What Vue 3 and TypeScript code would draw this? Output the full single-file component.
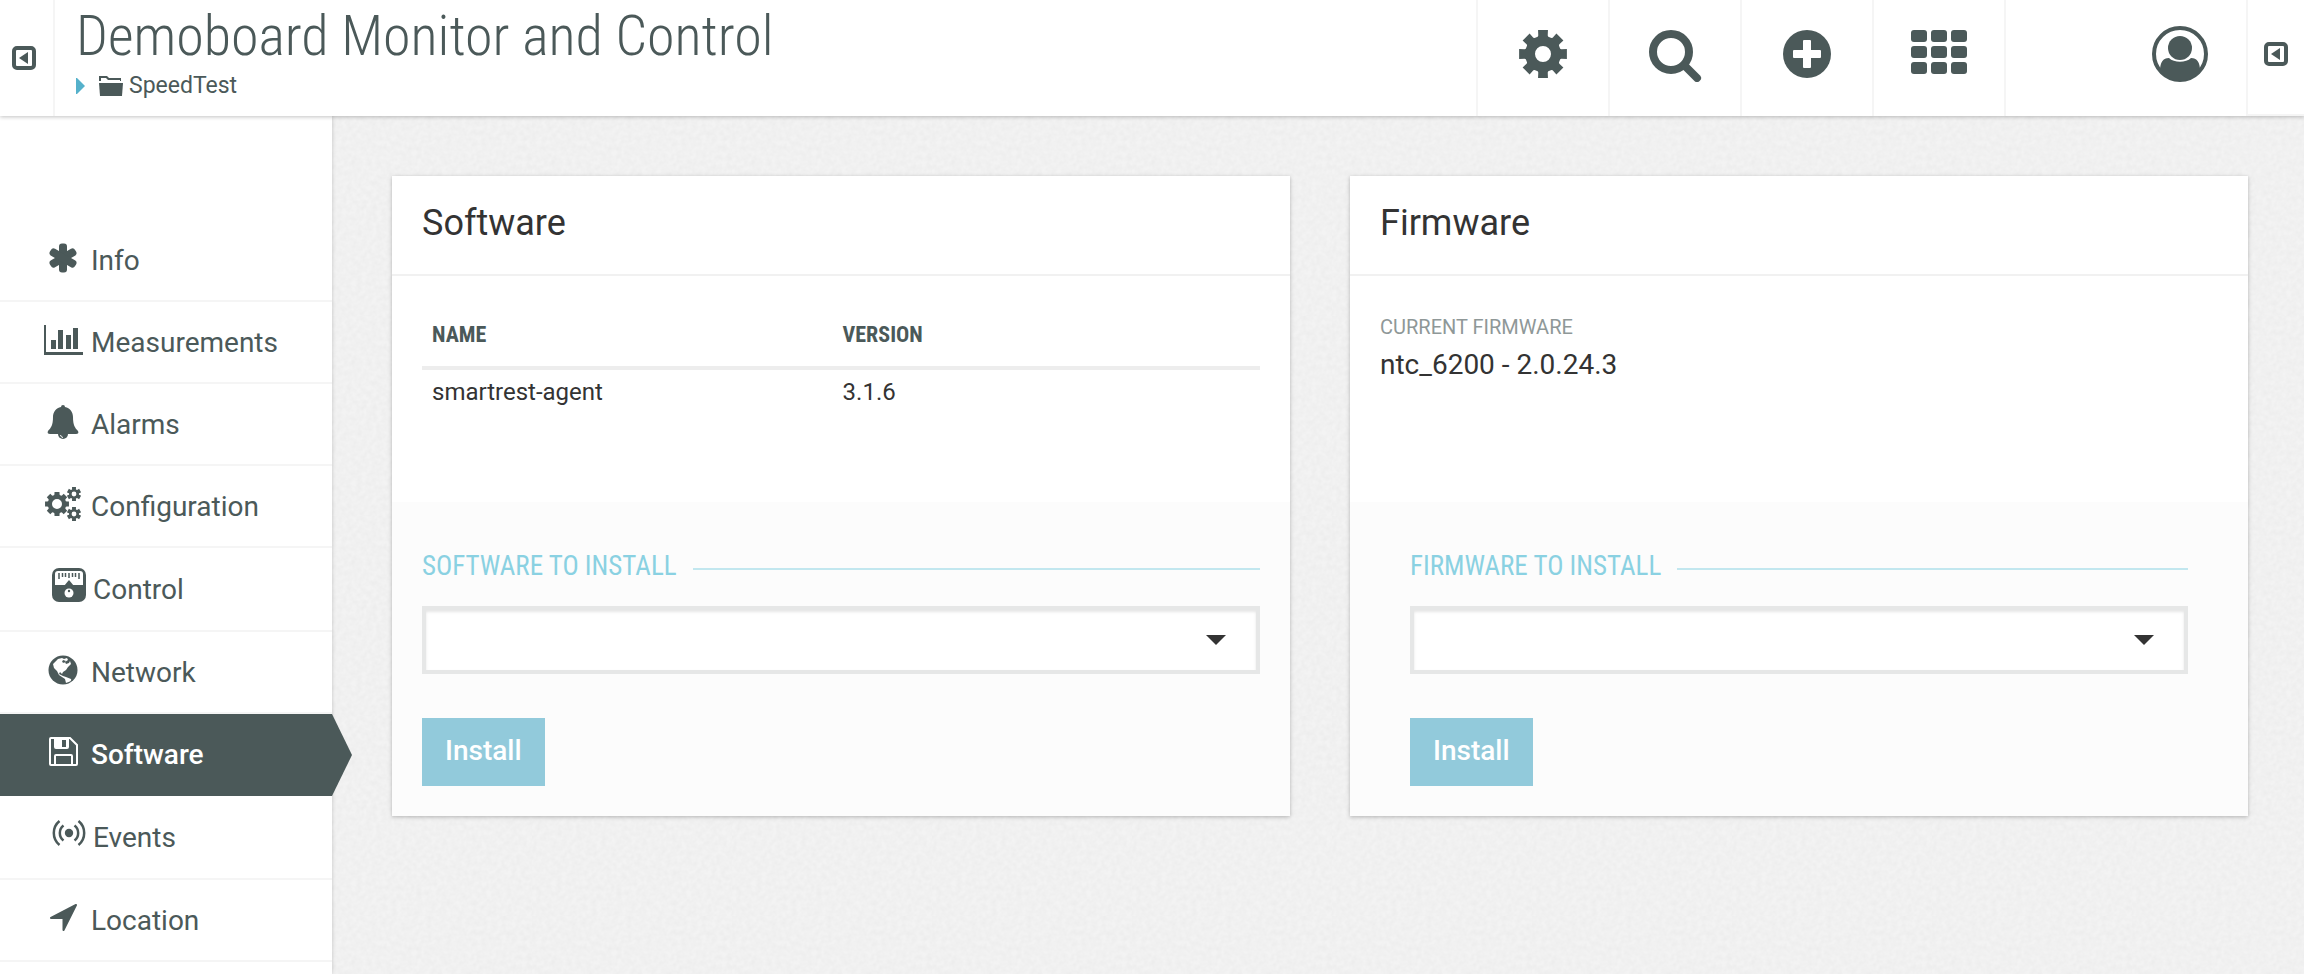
<script setup lang="ts">
import { ref } from 'vue'

type IconName =
  | 'info' | 'chart' | 'bell' | 'cogs' | 'control'
  | 'globe' | 'floppy' | 'events' | 'arrow'

interface NavItem {
  label: string
  icon: IconName
  wide?: boolean
}

const navItems: NavItem[] = [
  { label: 'Info', icon: 'info' },
  { label: 'Measurements', icon: 'chart' },
  { label: 'Alarms', icon: 'bell' },
  { label: 'Configuration', icon: 'cogs' },
  { label: 'Control', icon: 'control', wide: true },
  { label: 'Network', icon: 'globe' },
  { label: 'Software', icon: 'floppy' },
  { label: 'Events', icon: 'events', wide: true },
  { label: 'Location', icon: 'arrow' },
]

const active = ref('Software')
const software = [{ name: 'smartrest-agent', version: '3.1.6' }]
const chosenSoftware = ref('')
const chosenFirmware = ref('')
const apps = Array.from({ length: 9 }, (_, i) => ({ x: (i % 3) * 20, y: Math.floor(i / 3) * 16 }))

/* Gear outline with trapezoid teeth and a round hole, for fill-rule evenodd. */
function gear(cx: number, cy: number, outer: number, inner: number, hole: number, teeth = 8): string {
  const step = (Math.PI * 2) / teeth
  const points: string[] = []
  const at = (radius: number, angle: number) =>
    `${(cx + radius * Math.sin(angle)).toFixed(2)} ${(cy - radius * Math.cos(angle)).toFixed(2)}`
  for (let i = 0; i < teeth; i++) {
    const a = i * step
    points.push(at(inner, a - step * 0.38), at(inner + 1, a - step * 0.32))
    points.push(at(outer, a - step * 0.26), at(outer, a + step * 0.26))
    points.push(at(inner + 1, a + step * 0.32), at(inner, a + step * 0.38))
  }
  return `M${points.join('L')}Z M${cx - hole} ${cy}a${hole} ${hole} 0 1 0 ${hole * 2} 0a${hole} ${hole} 0 1 0 ${-hole * 2} 0Z`
}
</script>

<template>
  <div class="page">
    <header class="topbar">
      <button class="toggle toggle-left" type="button" aria-label="Toggle navigator">
        <svg width="24" height="24" viewBox="0 0 24 24">
          <rect x="2" y="2" width="20" height="20" rx="3" fill="none" stroke="currentColor" stroke-width="4" />
          <path d="M16 6v12L7 12z" fill="currentColor" />
        </svg>
      </button>
      <div class="heading">
        <h1>Demoboard Monitor and Control</h1>
        <nav class="crumbs" aria-label="Breadcrumb">
          <svg class="crumb-arrow" width="9" height="16" viewBox="0 0 9 16"><path d="M0 0h1l8 8-8 8H0z" fill="#55b1cb" /></svg>
          <a href="#speedtest">
            <svg width="24" height="20" viewBox="0 0 24 20" fill="currentColor">
              <path d="M0 7h24l-1 13H1z" />
              <path d="M0 5V0h8l2 2h12v3h-1V4H9L7 2H2v3z" />
            </svg>
            SpeedTest
          </a>
        </nav>
      </div>
      <div class="actions">
        <button type="button" aria-label="Settings">
          <svg width="48" height="48" viewBox="0 0 48 48"><path :d="gear(24, 24, 24.4, 18, 8)" fill="currentColor" fill-rule="evenodd" /></svg>
        </button>
        <button type="button" aria-label="Search">
          <svg width="56" height="52" viewBox="0 0 56 52" class="search">
            <circle cx="24" cy="22" r="18" fill="none" stroke="currentColor" stroke-width="8" />
            <path d="M38 36l12 12" stroke="currentColor" stroke-width="8" stroke-linecap="round" />
          </svg>
        </button>
        <button type="button" aria-label="Add">
          <svg width="48" height="48" viewBox="0 0 48 48">
            <circle cx="24" cy="24" r="24" fill="currentColor" />
            <rect x="20" y="10" width="8" height="28" rx="1" fill="#fff" />
            <rect x="10" y="20" width="28" height="8" rx="1" fill="#fff" />
          </svg>
        </button>
        <button type="button" aria-label="Applications">
          <svg width="56" height="48" viewBox="0 0 56 48" fill="currentColor">
            <rect v-for="(cell, i) in apps" :key="i" :x="cell.x" :y="cell.y" width="16" height="12" rx="3" />
          </svg>
        </button>
      </div>
      <button class="user" type="button" aria-label="User">
        <svg width="56" height="56" viewBox="0 0 56 56">
          <circle cx="28" cy="28" r="26" fill="none" stroke="currentColor" stroke-width="4" />
          <path d="M8 45C8 36 11 32 17 32C22 37 34 37 39 32C45 32 48 36 48 45C38 58 18 58 8 45z" fill="currentColor" />
          <circle cx="28" cy="22" r="12" fill="currentColor" />
        </svg>
      </button>
      <button class="toggle toggle-right" type="button" aria-label="Toggle side panel">
        <svg width="24" height="24" viewBox="0 0 24 24">
          <rect x="2" y="2" width="20" height="20" rx="3" fill="none" stroke="currentColor" stroke-width="4" />
          <path d="M16 6v12L7 12z" fill="currentColor" />
        </svg>
      </button>
    </header>

    <div class="body">
      <nav class="sidebar" aria-label="Device">
        <a
          v-for="item in navItems"
          :key="item.label"
          :href="'#' + item.label.toLowerCase()"
          :class="{ active: item.label === active, wide: item.wide }"
          @click.prevent="active = item.label"
        >
          <svg v-if="item.icon === 'info'" width="42" height="30" viewBox="-21 -15 42 30" fill="currentColor">
            <rect v-for="turn in [0, 60, 120]" :key="turn" x="-4" y="-14.5" width="8" height="29" rx="3" :transform="`rotate(${turn})`" />
          </svg>
          <svg v-else-if="item.icon === 'chart'" width="42" height="30" viewBox="-2 0 42 30" fill="currentColor">
            <path d="M0 0h2v27h37v3H0zM7 15h5v9H7zM14 5h5v19h-5zM22 10h5v14h-5zM29 3h5v21h-5z" />
          </svg>
          <svg v-else-if="item.icon === 'bell'" width="42" height="34" viewBox="-21 0 42 34" fill="currentColor">
            <path d="M-2 2a2 2 0 0 1 4 0C7 3 10 7 10 12C10 20 12 23 15 26C16 28 15 29 13 29H-13C-15 29-16 28-15 26C-12 23-10 20-10 12C-10 7-7 3-2 2z" />
            <path d="M-5 29H5A5 5 0 0 1-5 29z" />
            <path d="M-2.500 30a3 3 0 0 0 2.500 2.500" fill="none" stroke="#fff" />
          </svg>
          <svg v-else-if="item.icon === 'cogs'" width="42" height="34" viewBox="-3 0 42 34" fill="currentColor" fill-rule="evenodd">
            <path :d="gear(12, 17, 12.2, 9.300, 5)" />
            <path :d="gear(29, 7, 7.300, 5, 2.400, 6)" />
            <path :d="gear(29, 27, 7.300, 5, 2.400, 6)" />
          </svg>
          <svg v-else-if="item.icon === 'control'" width="34" height="34" viewBox="0 0 34 34">
            <rect width="34" height="34" rx="7" fill="currentColor" />
            <path d="M6 3h22q3 0 3 3v11H3V6q0-3 3-3z" fill="#fff" />
            <path d="M7 5v6M10.500 5v4M13.500 5v4M17 5v5M20.500 5v4M23.500 5v4M27 5v6" stroke="currentColor" stroke-width="1.500" />
            <path d="M12 18l5-6 5 6z" fill="currentColor" />
            <circle cx="17" cy="25" r="4.500" fill="#fff" />
            <circle cx="17" cy="23" r="1.200" fill="currentColor" />
          </svg>
          <svg v-else-if="item.icon === 'globe'" width="42" height="30" viewBox="-21 -15 42 30">
            <circle r="14.500" fill="currentColor" />
            <path d="M-10-6L-5-11L-1-12L1-11L4-12L5-10L2-8L3-6L6-7L7-9L8-6L5-3L3 0L0 2L-1 4L-3 2L-4 4L0 6L3 7L8 9C9 11 6 12 3 13L2 9L-4 5L-6 1L-9-2z" fill="#fff" />
            <path d="M0-10l3 1-2 2-2-1z" fill="currentColor" />
          </svg>
          <svg v-else-if="item.icon === 'floppy'" width="42" height="30" viewBox="-7 0 42 30">
            <path d="M1 2q0-1 1-1h19l7 7v19q0 1-1 1H2q-1 0-1-1z" fill="none" stroke="currentColor" stroke-width="2" />
            <path d="M5 1h15v9q0 2-2 2H7q-2 0-2-2zM13 3v7h4V3z" fill="currentColor" fill-rule="evenodd" />
            <path d="M6 28v-9q0-1 1-1h15q1 0 1 1v9" fill="none" stroke="currentColor" stroke-width="2" />
          </svg>
          <svg v-else-if="item.icon === 'events'" width="34" height="26" viewBox="-17 -13 34 26" fill="none" stroke="currentColor" stroke-width="2.500">
            <circle r="4.200" fill="currentColor" stroke="none" />
            <path d="M-5.500-7.500a9.500 9.500 0 0 0 0 15M5.500-7.500a9.500 9.500 0 0 1 0 15M-9.500-12a15.500 15.500 0 0 0 0 24M9.500-12a15.500 15.500 0 0 1 0 24" />
          </svg>
          <svg v-else width="42" height="28" viewBox="-7 0 42 28">
            <path d="M27 1L14.500 26V14H2z" fill="currentColor" stroke="currentColor" stroke-width="2" stroke-linejoin="round" />
          </svg>
          <span>{{ item.label }}</span>
        </a>
      </nav>

      <main class="content">
        <section class="card">
          <header><h2>Software</h2></header>
          <div class="card-body">
            <table>
              <thead>
                <tr><th scope="col">NAME</th><th scope="col">VERSION</th></tr>
              </thead>
              <tbody>
                <tr v-for="row in software" :key="row.name">
                  <td>{{ row.name }}</td>
                  <td>{{ row.version }}</td>
                </tr>
              </tbody>
            </table>
          </div>
          <form class="install" @submit.prevent>
            <label for="software-select">SOFTWARE TO INSTALL</label>
            <select id="software-select" v-model="chosenSoftware"><option value=""></option></select>
            <button type="submit">Install</button>
          </form>
        </section>

        <section class="card">
          <header><h2>Firmware</h2></header>
          <dl class="card-body current">
            <dt>CURRENT FIRMWARE</dt>
            <dd>ntc_6200 - 2.0.24.3</dd>
          </dl>
          <form class="install inset" @submit.prevent>
            <label for="firmware-select">FIRMWARE TO INSTALL</label>
            <select id="firmware-select" v-model="chosenFirmware"><option value=""></option></select>
            <button type="submit">Install</button>
          </form>
        </section>
      </main>
    </div>
  </div>
</template>

<style>
body {
  margin: 0;
}
</style>

<style scoped>
.page {
  --ink: #4b5959;
  --narrow: "Roboto Condensed", Roboto, "Liberation Sans", sans-serif;
  display: flex;
  flex-direction: column;
  min-height: 100vh;
  box-sizing: border-box;
  color: var(--ink);
  font-family: Roboto, "Liberation Sans", sans-serif;
  background: #f2f2f2;
}
.page * {
  box-sizing: border-box;
}
h1,
h2,
dl,
dd {
  margin: 0;
}
a {
  color: inherit;
  text-decoration: none;
}
button {
  border: 0;
  padding: 0;
  background: none;
  color: inherit;
  font-family: inherit;
  cursor: pointer;
}
svg {
  display: block;
  flex: none;
}

/* top bar */
.topbar {
  position: relative;
  z-index: 2;
  display: flex;
  height: 116px;
  background: #fff;
  box-shadow: 0 1px 4px rgba(0, 0, 0, 0.24);
}
.toggle {
  display: flex;
  align-items: center;
}
.toggle-left {
  width: 55px;
  padding-left: 12px;
  border-right: 2px solid #f5f5f5;
}
.toggle-right {
  width: 58px;
  padding: 0 0 6px 16px;
  border-left: 2px solid #f5f5f5;
  border-bottom: 2px solid #f5f5f5;
}
.heading {
  flex: 1;
  min-width: 0;
  padding: 6px 0 0 21px;
}
h1 {
  font: 300 56px/60px var(--narrow);
  white-space: nowrap;
}
.crumbs {
  display: flex;
  align-items: center;
  gap: 14px;
  height: 32px;
  margin-top: 4px;
  font-size: 23px;
  line-height: 32px;
}
.crumbs a {
  display: flex;
  align-items: center;
  gap: 6px;
}
.actions {
  display: flex;
  border-right: 2px solid #f5f5f5;
}
.actions button {
  width: 132px;
  border-left: 2px solid #f5f5f5;
}
.actions button,
.user {
  display: flex;
  align-items: center;
  justify-content: center;
  padding-bottom: 8px;
}
.search {
  margin-top: 4px;
}
.user {
  width: 132px;
  margin-left: 108px;
}

/* side navigation */
.body {
  display: flex;
  flex: 1;
}
.sidebar {
  position: relative;
  z-index: 1;
  flex: none;
  width: 332px;
  padding-top: 104px;
  background: #fff;
  box-shadow: 0 0 4px rgba(0, 0, 0, 0.2);
}
.sidebar a {
  position: relative;
  display: flex;
  align-items: center;
  gap: 7px;
  height: 82px;
  padding: 2px 0 0 42px;
  border-bottom: 2px solid #f5f5f5;
  font-size: 28px;
  line-height: 36px;
}
.sidebar a svg {
  margin-bottom: 6px;
}
.sidebar a.wide {
  height: 84px;
  padding-left: 52px;
}
.sidebar a.wide svg {
  margin-bottom: 10px;
}
.sidebar a.active {
  background: var(--ink);
  border-color: var(--ink);
  color: #fff;
  font-weight: 500;
}
.sidebar a.active::after {
  content: "";
  position: absolute;
  top: 0;
  bottom: -2px;
  left: 100%;
  width: 20px;
  background: var(--ink);
  clip-path: polygon(0 0, 100% 50%, 0 100%);
}

/* cards */
.content {
  flex: 1;
  display: grid;
  grid-template-columns: repeat(2, minmax(0, 1fr));
  align-items: start;
  gap: 60px;
  padding: 60px 56px 60px 60px;
  background: #f3f3f3 url("data:image/svg+xml,%3Csvg xmlns='http://www.w3.org/2000/svg' width='200' height='200'%3E%3Cfilter id='n'%3E%3CfeTurbulence type='fractalNoise' baseFrequency='.2' numOctaves='2' stitchTiles='stitch'/%3E%3CfeColorMatrix values='0 0 0 0 0 0 0 0 0 0 0 0 0 0 0 .04 0 0 0 -.01'/%3E%3C/filter%3E%3Crect width='200' height='200' filter='url(%23n)'/%3E%3C/svg%3E");
}
.card {
  display: flex;
  flex-direction: column;
  background: #fff;
  box-shadow: 0 1px 4px rgba(0, 0, 0, 0.26);
}
.card header {
  padding: 22px 30px 26px;
  border-bottom: 2px solid #f1f1f1;
}
h2 {
  color: #333;
  font-size: 36px;
  font-weight: 400;
  line-height: 50px;
}
.card-body {
  min-height: 226px;
  padding: 30px;
  color: #333;
}
table {
  width: 100%;
  border-collapse: collapse;
  table-layout: fixed;
  text-align: left;
  line-height: 28px;
}
th {
  padding: 15px 10px 17px;
  border-bottom: 4px solid #ededed;
  color: var(--ink);
  font-family: var(--narrow);
  font-size: 22px;
  font-weight: 700;
}
th:first-child {
  width: 49%;
}
td {
  padding: 8px 10px;
  font-size: 24px;
}
.current {
  padding-top: 37px;
}
dt {
  color: #8f9898;
  font-size: 20px;
  line-height: 28px;
}
dd {
  margin-top: 6px;
  font-size: 28px;
  line-height: 36px;
}

/* install forms */
.install {
  display: flex;
  flex-direction: column;
  align-items: flex-start;
  padding: 48px 30px 30px;
  background: #fcfcfc;
}
.install.inset {
  padding-left: 60px;
  padding-right: 60px;
}
.install label {
  display: flex;
  align-items: center;
  gap: 16px;
  width: 100%;
  margin-bottom: 24px;
  color: #8ad1e2;
  font: 400 27px/32px var(--narrow);
}
.install label::after {
  content: "";
  flex: 1;
  height: 2px;
  margin-top: 6px;
  background: #c2e7ef;
}
.install select {
  appearance: none;
  width: 100%;
  height: 68px;
  padding: 0 60px 0 20px;
  border: 4px solid #e6e7e7;
  border-radius: 0;
  background: #fff url("data:image/svg+xml,%3Csvg xmlns='http://www.w3.org/2000/svg' width='20' height='10'%3E%3Cpath d='M0 0h20L10 10z' fill='%23333'/%3E%3C/svg%3E") no-repeat right 30px center;
  box-shadow: inset 0 2px 3px rgba(0, 0, 0, 0.1);
  color: #333;
  font-family: inherit;
  font-size: 24px;
}
.install button {
  height: 68px;
  margin-top: 44px;
  padding: 0 23px 4px;
  background: #92cadb;
  color: #fff;
  font-size: 28px;
  font-weight: 500;
}
</style>
